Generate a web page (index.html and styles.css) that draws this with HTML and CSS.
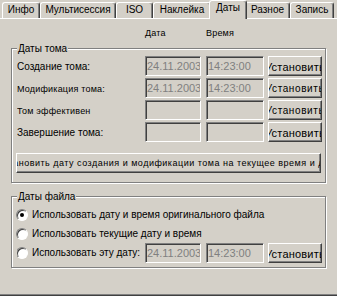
FILE: index.html
```html
<!DOCTYPE html>
<html lang="ru">
<head>
<meta charset="utf-8">
<title>Даты</title>
<link rel="stylesheet" href="styles.css">
</head>
<body>
<div class="tabs">
  <div class="tab w-info">Инфо</div>
  <div class="tab w-multi">Мультисессия</div>
  <div class="tab w-iso">ISO</div>
  <div class="tab w-label">Наклейка</div>
  <div class="tab tab-sel w-dates">Даты</div>
  <div class="tab w-misc">Разное</div>
  <div class="tab w-burn">Запись</div>
</div>
<div class="panel">
  <div class="colhead sm"><span class="ch-date">Дата</span><span>Время</span></div>

  <div class="group g-vol">
    <div class="caption">Даты тома</div>
    <div class="rows">
      <div class="row">
        <span class="lbl">Создание тома:</span>
        <span class="edit e-date">24.11.2003</span>
        <span class="edit e-time">14:23:00</span>
        <span class="btn b-set"><span>Установить</span></span>
      </div>
      <div class="row">
        <span class="lbl sm">Модификация тома:</span>
        <span class="edit e-date">24.11.2003</span>
        <span class="edit e-time">14:23:00</span>
        <span class="btn b-set b-sm"><span>Установить</span></span>
      </div>
      <div class="row">
        <span class="lbl sm">Том эффективен</span>
        <span class="edit e-date"></span>
        <span class="edit e-time"></span>
        <span class="btn b-set b-sm"><span>Установить</span></span>
      </div>
      <div class="row">
        <span class="lbl">Завершение тома:</span>
        <span class="edit e-date"></span>
        <span class="edit e-time"></span>
        <span class="btn b-set"><span>Установить</span></span>
      </div>
    </div>
    <div class="btn b-wide"><span>Установить дату создания и модификации тома на текущее время и дату</span></div>
  </div>

  <div class="group g-file">
    <div class="caption">Даты файла</div>
    <div class="rrows">
      <div class="rrow"><span class="radio on"></span><span>Использовать дату и время оригинального файла</span></div>
      <div class="rrow"><span class="radio"></span><span>Использовать текущие дату и время</span></div>
      <div class="row">
        <span class="lbl lbl-radio"><span class="radio"></span><span>Использовать эту дату:</span></span>
        <span class="edit e-date">24.11.2003</span>
        <span class="edit e-time">14:23:00</span>
        <span class="btn b-set"><span>Установить</span></span>
      </div>
    </div>
  </div>
</div>
</body>
</html>
```

FILE: styles.css
```css
* { box-sizing: border-box; }

body {
  margin: 0;
  width: 337px;
  height: 296px;
  overflow: hidden;
  background: #d4d0c8;
  color: #000;
  font-family: "Liberation Sans", Arial, sans-serif;
  font-size: 10px;
}

.sm { font-size: 9px; letter-spacing: 0.2px; }

/* tab strip */
.tabs {
  display: flex;
  align-items: flex-end;
  height: 18px;
  padding-left: 2px;
}
.tab {
  flex-shrink: 0;
  height: 16px;
  border-top: 1px solid #fff;
  border-left: 1px solid #fff;
  border-right: 1px solid #404040;
  border-radius: 3px 3px 0 0;
  box-shadow: inset -1px 0 #808080;
  text-align: center;
  line-height: 14px;
  white-space: nowrap;
  overflow: hidden;
}
.tab-sel {
  height: 19px;
  margin: 0 -2px -1px;
  position: relative;
  z-index: 1;
  background: #d4d0c8;
}
.w-info { width: 38px; }
.w-multi { width: 76px; }
.w-iso { width: 37px; }
.w-label { width: 58px; }
.w-dates { width: 38px; }
.w-misc { width: 45px; }
.w-burn { width: 44px; }

/* page */
.panel {
  height: 278px;
  border-top: 1px solid #fff;
  border-bottom: 1px solid #404040;
  box-shadow: inset 0 -1px #808080;
  padding-top: 8px;
}
.colhead {
  display: flex;
  margin-left: 145px;
  line-height: 13px;
}
.ch-date { width: 61px; }

/* group boxes */
.group {
  margin-left: 11px;
  width: 315px;
  border: 1px solid #808080;
  box-shadow: inset 1px 1px #fff, 1px 1px #fff;
  padding: 0 3px 0 5px;
}
.g-vol { margin-top: 8px; padding-bottom: 9px; }
.g-file { margin-top: 13px; padding-bottom: 4px; }
.caption {
  width: fit-content;
  height: 13px;
  margin-top: -7px;
  padding: 0 1px;
  background: #d4d0c8;
  line-height: 13px;
}

/* field rows */
.rows {
  display: flex;
  flex-direction: column;
  gap: 2px;
  margin-top: 1px;
}
.row { display: flex; height: 20px; }
.lbl {
  flex-shrink: 0;
  width: 128px;
  padding-top: 2px;
  line-height: 18px;
  white-space: nowrap;
  overflow: hidden;
}
.edit {
  flex-shrink: 0;
  height: 20px;
  border: 1px solid;
  border-color: #808080 #fff #fff #808080;
  box-shadow: inset 1px 1px #404040;
  padding-left: 1px;
  color: #808080;
  font-size: 11px;
  line-height: 18px;
  white-space: nowrap;
  overflow: hidden;
}
.e-date { width: 56px; }
.e-time { width: 58px; margin-left: 5px; }

.btn {
  flex-shrink: 0;
  display: flex;
  justify-content: center;
  align-items: center;
  overflow: hidden;
  white-space: nowrap;
  border: 1px solid;
  border-color: #fff #404040 #404040 #fff;
  box-shadow: inset -1px -1px #808080;
}
.btn > span { flex-shrink: 0; }
.b-set {
  width: 54px;
  height: 20px;
  margin-left: 4px;
  padding-top: 1px;
  font-size: 11px;
  letter-spacing: 0.2px;
}
.b-sm { font-size: 10px; letter-spacing: 0.6px; }
.b-wide {
  width: 305px;
  height: 20px;
  margin: 11px 0 0 -1px;
  font-size: 9px;
  letter-spacing: 0.5px;
}

/* radios */
.rrows {
  display: flex;
  flex-direction: column;
  margin-top: 2px;
}
.rrow {
  display: flex;
  align-items: center;
  height: 19px;
  white-space: nowrap;
}
.lbl-radio {
  display: flex;
  align-items: center;
  padding-top: 0;
}
.radio {
  flex-shrink: 0;
  display: flex;
  align-items: center;
  justify-content: center;
  width: 12px;
  height: 12px;
  margin: 0 4px 0 -1px;
  border-radius: 50%;
  border: 1px solid;
  border-color: #808080 #fff #fff #808080;
  background: #fff;
  box-shadow: inset 1px 1px #404040;
}
.radio.on::after {
  content: "";
  width: 4px;
  height: 4px;
  border-radius: 50%;
  background: #000;
}
```
